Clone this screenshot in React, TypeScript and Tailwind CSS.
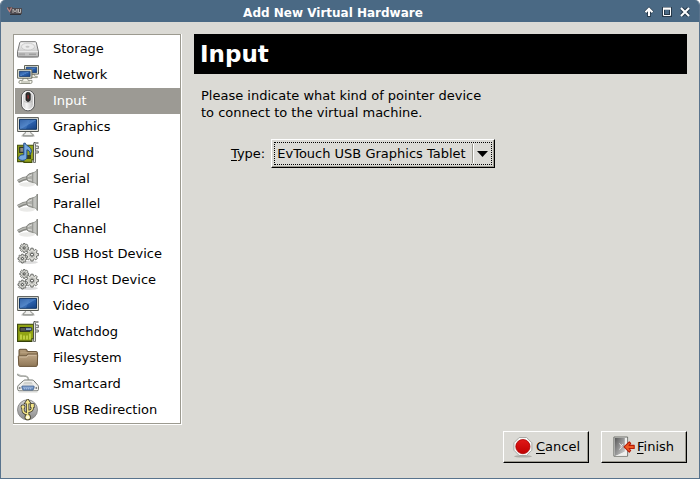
import { useState, type ReactNode } from "react";

function Icon({ children, className = "h-[22px] w-[22px]" }: { children: ReactNode; className?: string }) {
  return (
    <svg viewBox="0 0 22 22" className={`${className} shrink-0`} aria-hidden="true">
      {children}
    </svg>
  );
}

function Gradients() {
  return (
    <svg className="absolute h-0 w-0" aria-hidden="true">
      <defs>
        <linearGradient id="metal" x1="0" y1="0" x2="0" y2="1">
          <stop offset="0" stopColor="#fafafa" />
          <stop offset="1" stopColor="#b4b4b4" />
        </linearGradient>
        <linearGradient id="mouse" x1="0" y1="0" x2="1" y2="0">
          <stop offset="0" stopColor="#c4c4c4" />
          <stop offset="0.4" stopColor="#f6f6f6" />
          <stop offset="1" stopColor="#b0b0b0" />
        </linearGradient>
        <linearGradient id="screen" x1="0" y1="0" x2="1" y2="1">
          <stop offset="0" stopColor="#1f4f98" />
          <stop offset="0.5" stopColor="#4a7fc4" />
          <stop offset="0.55" stopColor="#2a60ac" />
          <stop offset="1" stopColor="#16417f" />
        </linearGradient>
        <linearGradient id="folder" x1="0" y1="0" x2="0" y2="1">
          <stop offset="0" stopColor="#c0a888" />
          <stop offset="1" stopColor="#8f7757" />
        </linearGradient>
        <linearGradient id="disc" x1="0" y1="0" x2="0" y2="1">
          <stop offset="0" stopColor="#d2d2d2" />
          <stop offset="1" stopColor="#8a8a8a" />
        </linearGradient>
        <linearGradient id="door" x1="0" y1="0" x2="1" y2="1">
          <stop offset="0" stopColor="#5a5a5a" />
          <stop offset="1" stopColor="#d4d4d4" />
        </linearGradient>
        <linearGradient id="stop" x1="0" y1="0" x2="0" y2="1">
          <stop offset="0" stopColor="#e01818" />
          <stop offset="1" stopColor="#c00000" />
        </linearGradient>
      </defs>
    </svg>
  );
}

const Storage = () => (
  <Icon>
    <ellipse cx="11" cy="19" rx="11" ry="1" fill="#c8c8c8" />
    <path d="M4 3.7h14.2q.8 0 1.1.8l2.2 9.3v4.2q0 .9-1 .9h-19q-1 0-1-.9v-4.2l2.3-9.3q.3-.8 1.2-.8z" fill="url(#metal)" stroke="#777" />
    <path d="M1.5 14h19v3.8h-19z" fill="#c0c0c0" />
    <path d="M1 13.7h20" stroke="#f8f8f8" strokeWidth=".8" />
    <ellipse cx="11" cy="8.6" rx="6.6" ry="3.5" fill="#ececec" stroke="#c4c4c4" strokeWidth=".8" />
    <ellipse cx="10.5" cy="8.7" rx="2" ry="1" fill="#c5c5c5" />
    <path d="M12 16.2h7M3 15.3v2M5 15.3v2M7 15.3v2" stroke="#8a8a8a" strokeWidth=".9" />
  </Icon>
);

const Network = () => (
  <Icon>
    <path d="M14 10h3l1 2.3h2.3v1.3H12z" fill="#ededdf" stroke="#888b7e" strokeWidth=".8" />
    <path d="M7.5 1.5h14v8.6h-14z" fill="#eeeedc" stroke="#62645a" />
    <path d="M9.3 3.2h10.4v5.3H9.3z" fill="url(#screen)" stroke="#153a70" strokeWidth=".8" />
    <path d="M6 14h4.5l.6 2.4H15v1.7q0 1.4-1.4 1.4H3.2q-1.4 0-1.4-1.4l1-1.7h3z" fill="#f5f5eb" stroke="#85877b" strokeWidth=".9" />
    <path d="M.6 5.6h14.3v8.6H.6z" fill="#eeeedc" stroke="#62645a" />
    <path d="M2.4 7.3h10.7v5.2H2.4z" fill="url(#screen)" stroke="#153a70" strokeWidth=".8" />
    <path d="M4 18h9" stroke="#a7a99b" />
  </Icon>
);

const Mouse = () => (
  <Icon>
    <rect x="4.5" y=".5" width="13" height="20.3" rx="6.2" fill="url(#mouse)" stroke="#5a5a5a" />
    <rect x="5.6" y="1.6" width="10.800" height="18" rx="5.200" fill="none" stroke="#fff" strokeWidth="1" />
    <rect x="9" y="2.400" width="4.200" height="9" rx="1.800" fill="#333" stroke="#111" strokeWidth=".8" />
    <rect x="10.4" y="5" width="1.400" height="3.700" rx=".7" fill="#8d2c2c" />
    <path d="M7 11.500q4 2.500 8 0" fill="none" stroke="#aaa" strokeWidth=".7" />
  </Icon>
);

const Monitor = () => (
  <Icon>
    <ellipse cx="11" cy="20" rx="7" ry="1" fill="#c5c5c5" />
    <path d="M8.5 15.5h5l.7 2.2 2 .7v1.4H6v-1.4l2-.7z" fill="#f0f0ee" stroke="#80827d" strokeWidth=".9" />
    <path d="M.6 1.6h20.8v13.9H.6z" fill="#e9e9e1" stroke="#575954" />
    <path d="M2.5 3.4h17v9.9h-17z" fill="url(#screen)" stroke="#123768" />
    <path d="M3 4h10L9 13H3z" fill="#6c99d4" fillOpacity=".28" />
  </Icon>
);

const Bracket = () => (
  <>
    <path d="M17.5 20.7V2.2q0-1.4 1.2-1.4h2.6" fill="none" stroke="#52544f" strokeWidth="2.6" />
    <path d="M17.5 20V2.2q0-1.2 1.2-1.2h2.2" fill="none" stroke="#e4e5e2" strokeWidth="1" />
    <path d="M18.8 4h2.5v2.7h-2.5M18.8 9h2.5v2h-2.5" fill="#eee" stroke="#555752" strokeWidth=".9" />
  </>
);

const Sound = () => (
  <Icon>
    <path d="M.6 3.2h16v14.5h-1.7v2.7h-8v-.8H.6z" fill="#94a31c" stroke="#43500a" strokeWidth="1.1" />
    <path d="M2.7 5.3h4.600v5H2.700z" fill="#8b8c83" stroke="#30342b" strokeWidth="1.2" />
    <path d="M8 13h6v4H8z" fill="#3d4418" />
    <path d="M8.3 1.2c1 3.5 6.3 3 6 8.6l-1.2 3c.1-3.5-1.4-4.7-3.2-5v7.4c0 2-2 3.2-4.4 3.2-2.2 0-3.9-1-3.9-2.5 0-2 2.7-3.5 5.2-3.1V1.2z" fill="#76a9e0" stroke="#204a87" />
    <Bracket />
  </Icon>
);

const Card = () => (
  <Icon>
    <path d="M.6 3.2h16v14.5h-1.7v2.7H.6z" fill="#91a414" stroke="#35400b" strokeWidth="1.1" />
    <path d="M3 6.5h10v3.8H3z" fill="#55584f" stroke="#23261f" />
    <path d="M8.5 6.8h6.2v2.6H8.5z" fill="#9ab3cf" stroke="#26334a" strokeWidth=".9" />
    <path d="M4 18.5v-5M7 18.5v-4M10 18.5v-4M13 18.5v-6" stroke="#d8e65a" strokeWidth="1.3" />
    <path d="M2.3 19.5h12" stroke="#667313" strokeWidth=".8" />
    <Bracket />
  </Icon>
);

const Plug = () => (
  <Icon>
    <ellipse cx="10" cy="16.5" rx="8" ry="2.2" fill="#eaeae8" />
    <path d="M1 13.500q5.500-3.400 10.500-3.600" fill="none" stroke="#868782" strokeWidth="3.600" />
    <path d="M1 13q5.500-3.200 10.500-3.500" fill="none" stroke="#b9bab5" strokeWidth="1.400" />
    <path d="M9.500 8.200l2.700-2.400 4-1v9.700l-4-1-2.200-1.400z" fill="#aeafaa" stroke="#858681" />
    <path d="M15.800 4.800l2.200-.8q1.800-.8 2.400-2.900v16.300q-.5-1.800-2.400-2.400l-2.200-.5z" fill="#c3c4c0" stroke="#8e908a" strokeWidth=".8" />
    <path d="M20.300 1v16.600" stroke="#888a84" strokeWidth="1.200" />
    <path d="M11 8.600l4-1.800M11 11.300l4 .9" stroke="#dededb" />
  </Icon>
);

function gearPath(radius: number, teeth: number) {
  const points: string[] = [];
  for (let i = 0; i < teeth; i++) {
    [-0.34, -0.22, 0.22, 0.34].forEach((offset, k) => {
      const angle = ((i + offset) * 2 * Math.PI) / teeth;
      const reach = k === 0 || k === 3 ? radius * 0.76 : radius;
      points.push(`${(Math.cos(angle) * reach).toFixed(2)} ${(Math.sin(angle) * reach).toFixed(2)}`);
    });
  }
  return `M${points.join("L")}Z`;
}

function Gear({ x, y, r }: { x: number; y: number; r: number }) {
  return (
    <g transform={`translate(${x} ${y})`}>
      <path d={gearPath(r, 8)} fill="#deded9" stroke="#60625d" strokeWidth=".9" />
      <circle r={r * 0.45} fill="none" stroke="#a9aaa6" strokeWidth=".7" />
      <circle r={r * 0.24} fill="#f6f6f6" stroke="#3c3e3a" strokeWidth="1" />
    </g>
  );
}

const Gears = () => (
  <Icon>
    <ellipse cx="12" cy="19.3" rx="9" ry="1.6" fill="#dcdcdc" />
    <Gear x={7.2} y={4.9} r={4.5} />
    <Gear x={5.4} y={15.6} r={4.5} />
    <Gear x={15} y={11.6} r={6.5} />
  </Icon>
);

const Folder = () => (
  <Icon>
    <path d="M2 17.8V3.3q0-1 1-1h6q.8 0 1 .8l.4 1.5h9q1 0 1 1v12z" fill="#a18967" stroke="#655036" />
    <path d="M3.3 4h5.4M3.3 5.8h16" stroke="#c3ac8b" strokeWidth=".9" />
    <path d="M1.3 9.6q0-.8.8-.8h7.2l1.4-1.7h9.2q.8 0 .8.8l-.5 10.5q-.1 1-1 1H2.8q-1 0-1-1z" fill="url(#folder)" stroke="#6c573c" />
    <path d="M2.5 10h7.3l1.4-1.7h8.2" fill="none" stroke="#d3c0a4" strokeWidth=".9" />
  </Icon>
);

const Smartcard = () => (
  <Icon>
    <path d="M.3 1q1.2 2 6 2c4 0 5.2 1 5.2 4" fill="none" stroke="#8d8f8a" strokeWidth="1.6" />
    <path d="M.3.8q1.2 2 6 2c4 0 5.2 1 5.2 4" fill="none" stroke="#dadbd8" strokeWidth=".6" />
    <path d="M8 7h7.2q1 0 1.7.8l4 4.5q.6.6.6 1.5v2.5q0 1.5-1.5 1.5H2.2q-1.5 0-1.5-1.5v-2.5q0-.9.6-1.5L6.3 7.8Q7 7 8 7z" fill="#f0f0ee" stroke="#777a75" />
    <path d="M7.5 9h7l1.6 2.6H5.8z" fill="#d0d2ce" />
    <path d="M5.6 13h10.8q1 0 .8 1l-.6 2.1q-.3 1-1.3 1H6.7q-1 0-1.3-1L4.800 14q-.2-1 .8-1z" fill="#6f93c5" stroke="#3c5a85" strokeWidth=".8" />
    <path d="M6.5 14.2h9M7.2 15.8h7.8" stroke="#dbe7f8" strokeWidth=".8" strokeDasharray="1 1" />
    <circle cx="2.8" cy="15" r=".9" fill="#777" />
    <circle cx="19.3" cy="15" r=".9" fill="#777" />
    <path d="M1.5 19h19" stroke="#d5d5d2" />
  </Icon>
);

const UsbMark = () => (
  <>
    <path d="M10.7 3v14M10.7 15Q6 14 6 11V8M10.7 12.5q4.6-.5 4.6-3.2V7" fill="none" />
    <path d="M9.200 3.800l1.500-2.300 1.500 2.300z" />
    <circle cx="6" cy="7.8" r=".9" />
    <path d="M14.500 5.800h1.600v1.600h-1.600z" />
    <circle cx="10.7" cy="18.2" r="1.6" />
  </>
);

const Usb = () => (
  <Icon>
    <circle cx="10.5" cy="10.8" r="10" fill="url(#disc)" stroke="#777" strokeWidth=".8" />
    <g stroke="#3f3c2c" fill="#3f3c2c" strokeWidth="3">
      <UsbMark />
    </g>
    <g stroke="#f4e68a" fill="#f4e68a" strokeWidth="1.5">
      <UsbMark />
    </g>
    <circle cx="10.7" cy="18.2" r="1.8" fill="#fffbe0" />
  </Icon>
);

const CancelIcon = () => (
  <Icon>
    <ellipse cx="11" cy="20.3" rx="9" ry="1.3" fill="#aeada8" />
    <path d="M7.2 1.5h7.4l5.3 5.3v7.4l-5.3 5.3H7.2l-5.3-5.3V6.8z" fill="#f8f8f7" stroke="#a8aaa5" />
    <circle cx="10.9" cy="10.6" r="7.1" fill="url(#stop)" stroke="#a90000" strokeWidth=".8" />
  </Icon>
);

const FinishIcon = () => (
  <Icon>
    <path d="M.9 1h13.7v19.2H.9z" fill="#eaeae8" stroke="#6e706b" />
    <path d="M1.8 1.900h11.800v17.400H1.800z" fill="url(#door)" />
    <path d="M2 20l9.600-4.500V2h2.500v17.800z" fill="#efefed" />
    <path d="M2 2h9.5v13.3L2 19.8z" fill="url(#door)" />
    <path d="M6.5 7.5l2.5 3-2.5 3M9.8 8l-2 2.500" fill="none" stroke="#e8e8e8" />
    <path d="M11 10.8l5.3-4.9 1.4 1.5-1.7 2h5.2v3.1H16l1.7 2-1.4 1.6z" fill="#ef5b25" stroke="#b51c08" strokeWidth="1.1" strokeLinejoin="round" />
  </Icon>
);

const devices = [
  { name: "Storage", icon: Storage },
  { name: "Network", icon: Network },
  { name: "Input", icon: Mouse },
  { name: "Graphics", icon: Monitor },
  { name: "Sound", icon: Sound },
  { name: "Serial", icon: Plug, short: true },
  { name: "Parallel", icon: Plug, short: true },
  { name: "Channel", icon: Plug, short: true },
  { name: "USB Host Device", icon: Gears },
  { name: "PCI Host Device", icon: Gears },
  { name: "Video", icon: Monitor },
  { name: "Watchdog", icon: Card },
  { name: "Filesystem", icon: Folder },
  { name: "Smartcard", icon: Smartcard },
  { name: "USB Redirection", icon: Usb },
];

function TitleBar() {
  return (
    <header className="flex h-[22px] items-center bg-[#4a6984] pr-2 pl-1.5 text-white">
      <svg viewBox="0 0 16 10" className="h-2.5 w-4" aria-hidden="true">
        <path d="M0 1h5l1 1h9v6H4L2 6z" fill="#4e4b50" />
        <path d="M0 1.500l2.500 4 2-4" fill="none" stroke="#b98484" strokeWidth="1.2" />
        <path d="M6 7V3l2 3 2-3v4M11.500 3v3.500h2V3" fill="none" stroke="#b4b2b0" strokeWidth="1" />
        <path d="M3 8.500h11" stroke="#303238" />
      </svg>
      <h1 className="flex-1 pt-1 text-center text-[12px] leading-4 font-bold">Add New Virtual Hardware</h1>
      <div className="flex gap-1.5 pt-0.5">
        <button type="button" aria-label="Shade" className="h-3 w-3">
          <svg viewBox="0 0 12 12" className="h-3 w-3">
            <path d="M6 11V3M2.500 6.500L6 3l3.500 3.500" fill="none" stroke="#26394a" strokeWidth="3.6" />
            <path d="M6 10V3M2.500 6.200L6 2.700l3.500 3.500" fill="none" stroke="#fff" strokeWidth="2" />
          </svg>
        </button>
        <button type="button" aria-label="Maximize" className="h-3 w-3">
          <svg viewBox="0 0 12 12" className="h-3 w-3">
            <path d="M2.500 2.500h7v7h-7z" fill="none" stroke="#26394a" strokeWidth="3" />
            <path d="M2.500 3h7v6.500h-7z" fill="none" stroke="#fff" />
            <path d="M2 2.500h8" stroke="#fff" strokeWidth="2" />
          </svg>
        </button>
        <button type="button" aria-label="Close" className="h-3 w-3">
          <svg viewBox="0 0 12 12" className="h-3 w-3">
            <path d="M2.500 2.500l7 7M9.500 2.500l-7 7" stroke="#26394a" strokeWidth="4" />
            <path d="M2 2l8 8M10 2l-8 8" stroke="#fff" strokeWidth="2" />
          </svg>
        </button>
      </div>
    </header>
  );
}

const raised =
  "border border-t-white border-l-white border-r-black border-b-black shadow-[inset_-1px_-1px_0_#9c9a90]";

export default function App() {
  const [selected, setSelected] = useState("Input");
  return (
    <div className="bg-white">
      <div className="flex min-h-screen flex-col overflow-hidden rounded-t-[5px] border border-t-0 border-[#58738d] bg-[#dbdad5] font-['DejaVu_Sans',sans-serif] text-[13px] leading-[17px] text-black">
        <Gradients />
        <TitleBar />
        <div className="flex flex-1 gap-3 px-3 pt-3">
          <nav aria-label="Hardware" className="self-start border-r border-b border-white">
            <ul className="w-[168px] border border-[#9c9a90] bg-white p-px pr-0 pb-0">
              {devices.map(({ name, icon: Glyph, short }) => (
                <li key={name}>
                  <button
                    type="button"
                    aria-pressed={selected === name}
                    onClick={() => setSelected(name)}
                    className={`flex w-full items-center gap-3.5 pl-0.5 text-left ${short ? "h-[25px]" : "h-[26px]"} ${
                      selected === name ? "bg-[#9c9a94] text-white" : ""
                    }`}
                  >
                    <Glyph />
                    <span className="pb-px">{name}</span>
                  </button>
                </li>
              ))}
            </ul>
          </nav>
          <main className="flex-1">
            <h2 className="flex h-10 items-center bg-black px-1.5 text-[23px] leading-7 font-bold text-white">Input</h2>
            <p className="mt-[13px] px-[7px]">
              Please indicate what kind of pointer device
              <br />
              to connect to the virtual machine.
            </p>
            <div className="mt-[18px] flex items-center gap-1.5 pl-[37px]">
              <label htmlFor="type">
                <span className="underline underline-offset-2">T</span>ype:
              </label>
              <div className={`relative p-0.5 ${raised}`}>
                <select
                  id="type"
                  className="block h-[23px] w-[218px] appearance-none border border-dotted border-black bg-transparent pl-0.5 outline-none"
                >
                  <option>EvTouch USB Graphics Tablet</option>
                  <option>Generic USB Mouse</option>
                </select>
                <div className="pointer-events-none absolute inset-y-1 right-1.5 flex items-center border-l border-[#9c9a90] pl-1 shadow-[inset_1px_0_0_white]">
                  <svg viewBox="0 0 11 6" className="h-1.5 w-[11px]" aria-hidden="true">
                    <path d="M0 0h11L5.500 6z" />
                  </svg>
                </div>
              </div>
            </div>
          </main>
        </div>
        <footer className="flex justify-end gap-3 px-3 pt-1.5 pb-[15px]">
          <button type="button" className={`flex h-8 w-[86px] items-center gap-0.5 pl-2 ${raised}`}>
            <CancelIcon />
            <span className="pb-0.5">
              <span className="underline underline-offset-2">C</span>ancel
            </span>
          </button>
          <button type="button" className={`flex h-8 w-[86px] items-center gap-0.5 pl-[11px] ${raised}`}>
            <FinishIcon />
            <span className="pb-0.5">
              <span className="underline underline-offset-2">F</span>inish
            </span>
          </button>
        </footer>
      </div>
    </div>
  );
}
